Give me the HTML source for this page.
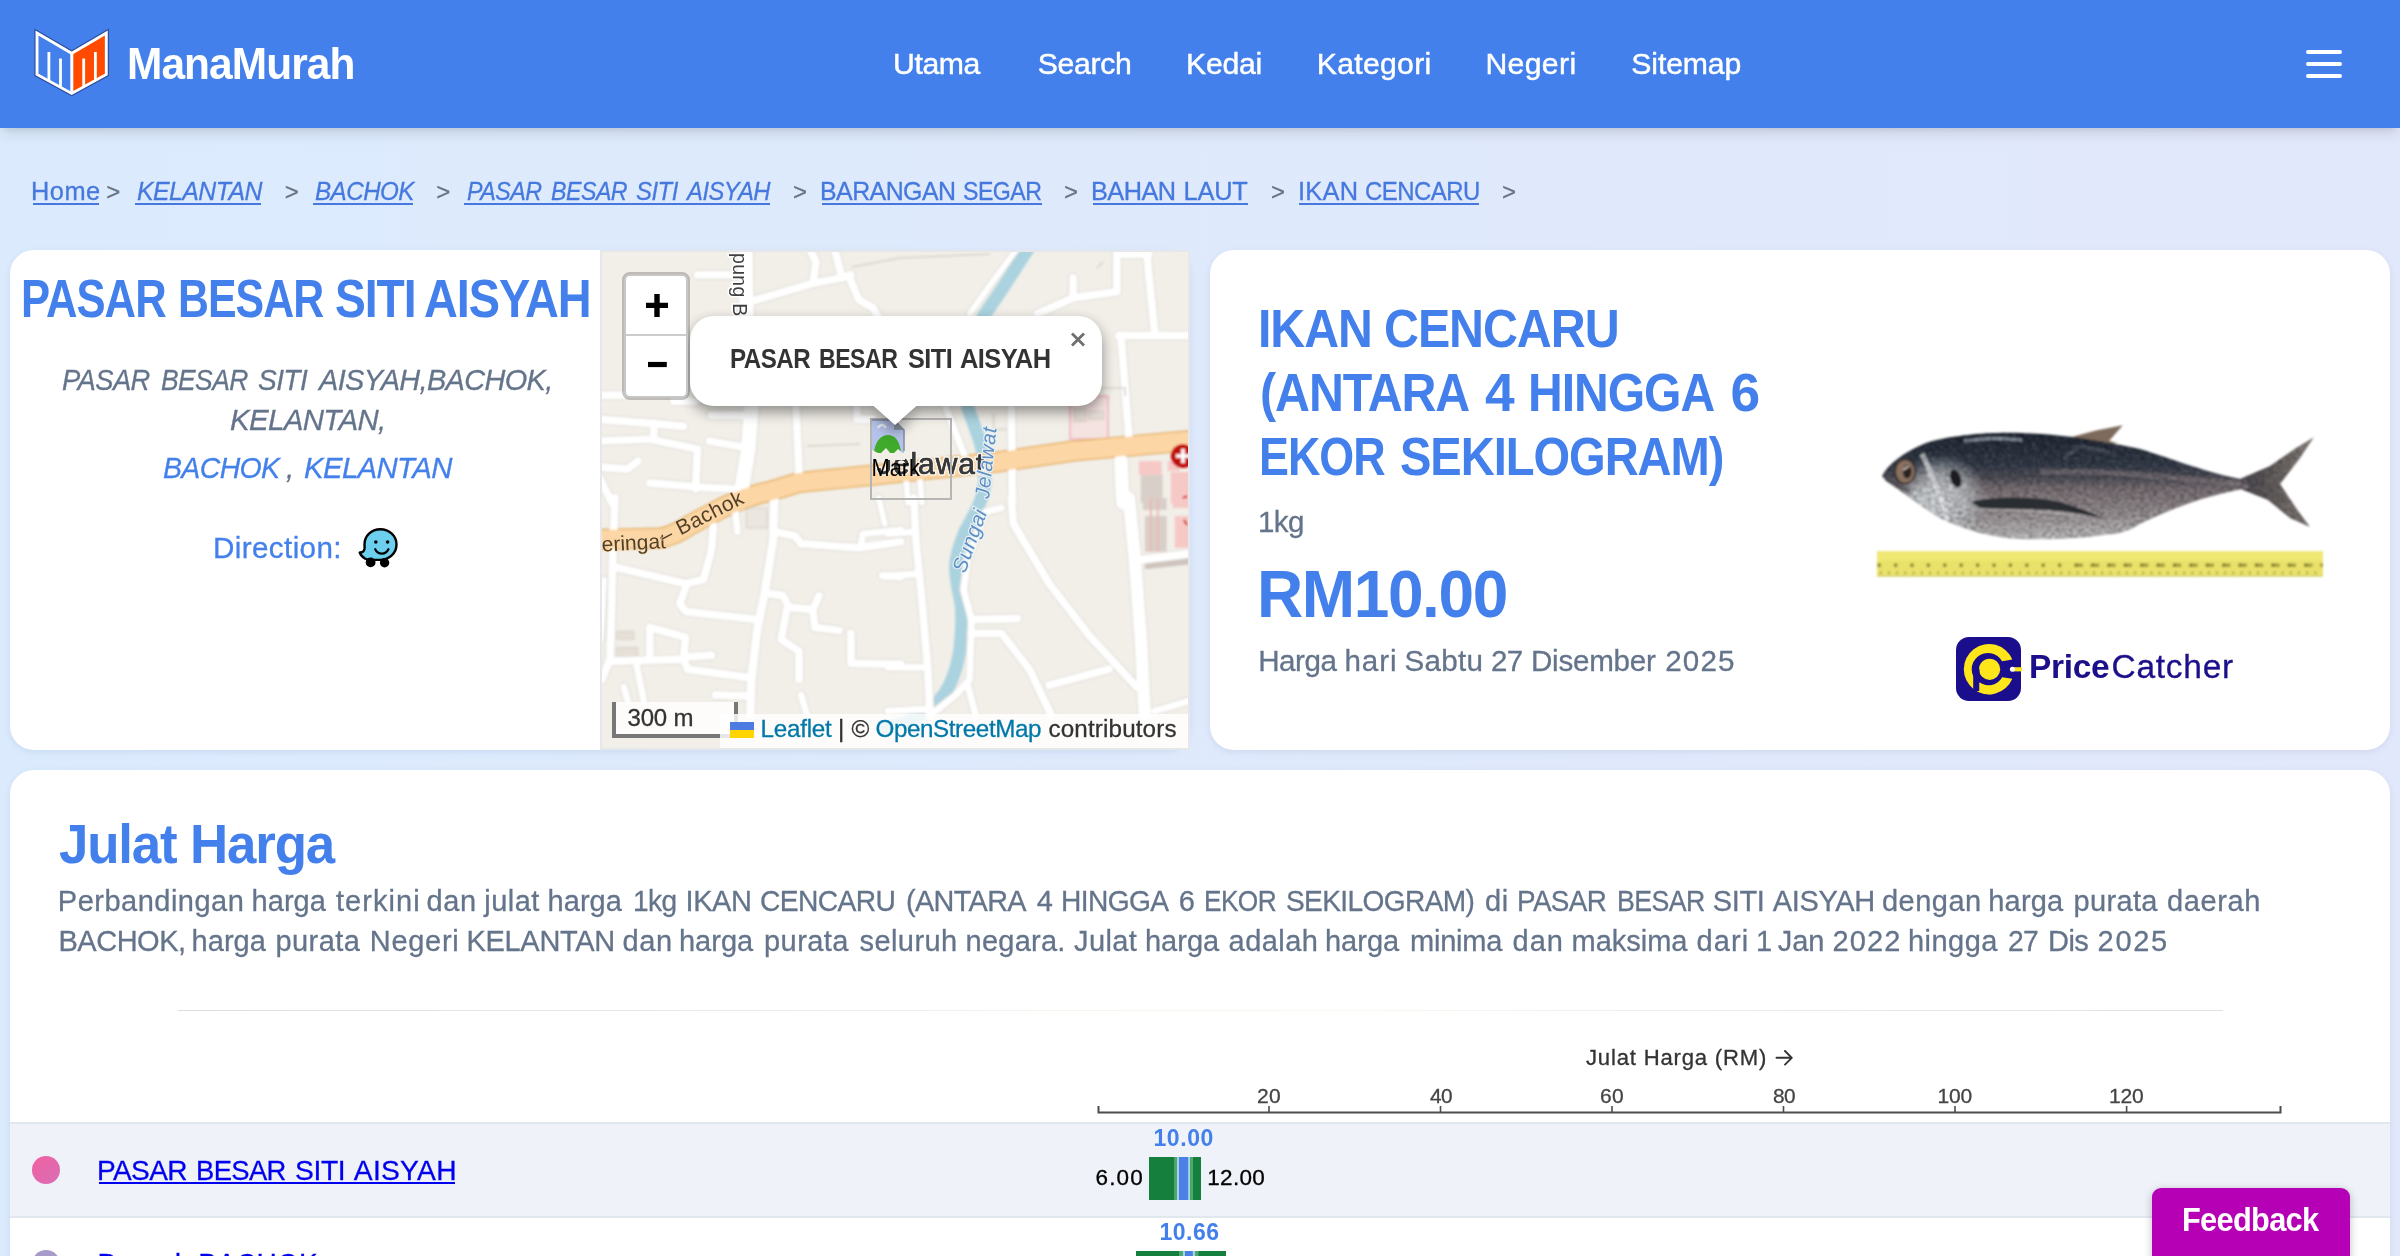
<!DOCTYPE html>
<html><head><meta charset="utf-8"><title>ManaMurah</title>
<style>
html,body{margin:0;padding:0}
body{width:2400px;height:1256px;overflow:hidden;position:relative;font-family:"Liberation Sans",sans-serif;background:linear-gradient(90deg,#dbebfd,#e2e8fb)}
#root{position:absolute;left:0;top:0;width:2400px;height:1256px;will-change:transform}
.t{position:absolute;white-space:nowrap;line-height:1;transform-origin:0 50%}
.u{position:absolute}
#hdr{position:absolute;left:0;top:0;width:2400px;height:128px;background:#4380ec;box-shadow:0 8px 12px -2px rgba(0,0,0,.1),0 4px 8px -4px rgba(0,0,0,.1)}
.hb{position:absolute;left:2306px;width:36px;height:4px;border-radius:2px;background:#fff}
.card{position:absolute;background:#fff;border-radius:24px;box-shadow:0 2px 6px rgba(60,80,140,.10)}
.dot{position:absolute;width:28px;height:28px;border-radius:50%}
#row1{position:absolute;left:10px;top:1122px;width:2380px;height:96px;box-sizing:border-box;background:#eff2f8;border-top:2px solid #e1e7ef;border-bottom:2px solid #e1e7ef}
#fb{position:absolute;left:2152px;top:1188px;width:198px;height:80px;border-radius:9px;background:#b500b5;box-shadow:0 2px 8px rgba(0,0,0,.25)}
svg{position:absolute;overflow:visible}
@media (max-width:1500px){html{zoom:.5}}
</style></head>
<body>
<div id="root">
<div id="hdr"></div>
<svg style="left:28px;top:22px" width="90" height="84" viewBox="28 22 90 84">
<polygon points="37,33 71.7,53.3 106.3,33 106.3,74.4 71.7,93.4 37,74.4" fill="none" stroke="#2c4c98" stroke-width="5.2" stroke-linejoin="miter"/>
<polygon points="37,33 71.7,53.3 71.7,93.4 37,74.4" fill="#4380ec"/>
<polygon points="71.7,53.3 106.3,33 106.3,74.4 71.7,93.4" fill="#ff4a00"/>
<path d="M48.9,52V80.9M60.5,58.6V87.3M83.7,58.6V86.8M95.4,52V80.4" stroke="#fff" stroke-width="2.8" fill="none"/>
<polygon points="37,33 71.7,53.3 106.3,33 106.3,74.4 71.7,93.4 37,74.4" fill="none" stroke="#fff" stroke-width="2.9" stroke-linejoin="miter"/>
<path d="M71.8,53.3V93.4" stroke="#fff" stroke-width="3" fill="none"/>
</svg>
<span class="t" style="left:127.16px;top:41.08px;font-size:44.8px;font-weight:700;letter-spacing:-0.986px;transform:scaleX(0.9476);color:#fff;">ManaMurah</span>
<span class="t" style="left:893.00px;top:48.94px;font-size:30.2px;letter-spacing:-0.406px;color:#fff;-webkit-text-stroke:.45px #fff;">Utama</span>
<span class="t" style="left:1037.75px;top:48.94px;font-size:30.2px;letter-spacing:-0.322px;color:#fff;-webkit-text-stroke:.45px #fff;">Search</span>
<span class="t" style="left:1186.00px;top:48.94px;font-size:30.2px;letter-spacing:-0.250px;color:#fff;-webkit-text-stroke:.45px #fff;">Kedai</span>
<span class="t" style="left:1316.75px;top:48.94px;font-size:30.2px;letter-spacing:0.289px;color:#fff;-webkit-text-stroke:.45px #fff;">Kategori</span>
<span class="t" style="left:1485.40px;top:48.94px;font-size:30.2px;letter-spacing:0.356px;color:#fff;-webkit-text-stroke:.45px #fff;">Negeri</span>
<span class="t" style="left:1631.30px;top:48.94px;font-size:30.2px;letter-spacing:-0.125px;color:#fff;-webkit-text-stroke:.45px #fff;">Sitemap</span>
<div class="hb" style="top:50px"></div><div class="hb" style="top:62px"></div><div class="hb" style="top:74px"></div>
<span class="t" style="left:31.00px;top:179.20px;font-size:25.4px;letter-spacing:0.464px;-webkit-text-stroke:.3px;color:#4678de;">Home</span>
<div class="u" style="left:32.5px;top:202.6px;width:66.5px;height:2px;background:#4678de"></div>
<span class="t" style="left:137.00px;top:179.20px;font-size:25.4px;font-style:italic;letter-spacing:-0.559px;transform:scaleX(0.9774);-webkit-text-stroke:.3px;color:#4678de;">KELANTAN</span>
<div class="u" style="left:135px;top:202.6px;width:126px;height:2px;background:#4678de"></div>
<span class="t" style="left:314.50px;top:179.20px;font-size:25.4px;font-style:italic;letter-spacing:-0.559px;transform:scaleX(0.9526);-webkit-text-stroke:.3px;color:#4678de;">BACHOK</span>
<div class="u" style="left:312.5px;top:202.6px;width:100.5px;height:2px;background:#4678de"></div>
<span class="t" style="left:467.00px;top:179.20px;font-size:25.4px;font-style:italic;letter-spacing:-0.559px;transform:scaleX(0.9152);-webkit-text-stroke:.3px;color:#4678de;">PASAR</span>
<span class="t" style="left:551.00px;top:179.20px;font-size:25.4px;font-style:italic;letter-spacing:-0.559px;transform:scaleX(0.9137);-webkit-text-stroke:.3px;color:#4678de;">BESAR</span>
<span class="t" style="left:636.00px;top:179.20px;font-size:25.4px;font-style:italic;letter-spacing:-0.559px;transform:scaleX(0.9437);-webkit-text-stroke:.3px;color:#4678de;">SITI</span>
<span class="t" style="left:687.38px;top:179.20px;font-size:25.4px;font-style:italic;letter-spacing:-0.559px;transform:scaleX(0.9389);-webkit-text-stroke:.3px;color:#4678de;">AISYAH</span>
<div class="u" style="left:464px;top:202.6px;width:305.5px;height:2px;background:#4678de"></div>
<span class="t" style="left:820.04px;top:179.20px;font-size:25.4px;letter-spacing:-0.559px;transform:scaleX(0.9811);-webkit-text-stroke:.3px;color:#4678de;">BARANGAN</span>
<span class="t" style="left:962.69px;top:179.20px;font-size:25.4px;letter-spacing:-0.559px;transform:scaleX(0.9107);-webkit-text-stroke:.3px;color:#4678de;">SEGAR</span>
<div class="u" style="left:821.5px;top:202.6px;width:220.0px;height:2px;background:#4678de"></div>
<span class="t" style="left:1091.01px;top:179.20px;font-size:25.4px;letter-spacing:-0.559px;transform:scaleX(0.9975);-webkit-text-stroke:.3px;color:#4678de;">BAHAN</span>
<span class="t" style="left:1183.50px;top:179.20px;font-size:25.4px;letter-spacing:-0.198px;-webkit-text-stroke:.3px;color:#4678de;">LAUT</span>
<div class="u" style="left:1092.5px;top:202.6px;width:155.0px;height:2px;background:#4678de"></div>
<span class="t" style="left:1298.00px;top:179.20px;font-size:25.4px;letter-spacing:0.258px;-webkit-text-stroke:.3px;color:#4678de;">IKAN</span>
<span class="t" style="left:1364.66px;top:179.20px;font-size:25.4px;letter-spacing:-0.559px;transform:scaleX(0.9436);-webkit-text-stroke:.3px;color:#4678de;">CENCARU</span>
<div class="u" style="left:1299px;top:202.6px;width:180px;height:2px;background:#4678de"></div>
<span class="t" style="left:106.30px;top:180.38px;font-size:24px;-webkit-text-stroke:.3px;color:#6b7280;">&gt;</span>
<span class="t" style="left:284.70px;top:180.38px;font-size:24px;-webkit-text-stroke:.3px;color:#6b7280;">&gt;</span>
<span class="t" style="left:436.30px;top:180.38px;font-size:24px;-webkit-text-stroke:.3px;color:#6b7280;">&gt;</span>
<span class="t" style="left:793.00px;top:180.38px;font-size:24px;-webkit-text-stroke:.3px;color:#6b7280;">&gt;</span>
<span class="t" style="left:1064.00px;top:180.38px;font-size:24px;-webkit-text-stroke:.3px;color:#6b7280;">&gt;</span>
<span class="t" style="left:1271.00px;top:180.38px;font-size:24px;-webkit-text-stroke:.3px;color:#6b7280;">&gt;</span>
<span class="t" style="left:1502.00px;top:180.38px;font-size:24px;-webkit-text-stroke:.3px;color:#6b7280;">&gt;</span>
<div class="card" style="left:10px;top:250px;width:1180px;height:500px"></div>
<div class="card" style="left:1210px;top:250px;width:1180px;height:500px"></div>
<div class="card" style="left:10px;top:770px;width:2380px;height:600px"></div>
<span class="t" style="left:21.04px;top:271.78px;font-size:53.3px;font-weight:700;letter-spacing:-1.173px;transform:scaleX(0.8187);color:#4380ec;">PASAR</span>
<span class="t" style="left:178.09px;top:271.78px;font-size:53.3px;font-weight:700;letter-spacing:-1.173px;transform:scaleX(0.8033);color:#4380ec;">BESAR</span>
<span class="t" style="left:334.63px;top:271.78px;font-size:53.3px;font-weight:700;letter-spacing:-1.173px;transform:scaleX(0.8662);color:#4380ec;">SITI</span>
<span class="t" style="left:424.12px;top:271.78px;font-size:53.3px;font-weight:700;letter-spacing:-1.173px;transform:scaleX(0.8800);color:#4380ec;">AISYAH</span>
<span class="t" style="left:62.00px;top:364.84px;font-size:29.6px;font-style:italic;letter-spacing:-0.651px;transform:scaleX(0.9248);-webkit-text-stroke:.3px;color:#64748b;">PASAR</span>
<span class="t" style="left:160.50px;top:364.84px;font-size:29.6px;font-style:italic;letter-spacing:-0.651px;transform:scaleX(0.8937);-webkit-text-stroke:.3px;color:#64748b;">BESAR</span>
<span class="t" style="left:258.00px;top:364.84px;font-size:29.6px;font-style:italic;letter-spacing:-0.651px;transform:scaleX(0.9504);-webkit-text-stroke:.3px;color:#64748b;">SITI</span>
<span class="t" style="left:318.95px;top:364.84px;font-size:29.6px;font-style:italic;letter-spacing:-0.651px;transform:scaleX(0.9763);-webkit-text-stroke:.3px;color:#64748b;">AISYAH,BACHOK,</span>
<span class="t" style="left:229.50px;top:404.84px;font-size:29.6px;font-style:italic;letter-spacing:-0.651px;transform:scaleX(0.9946);-webkit-text-stroke:.3px;color:#64748b;">KELANTAN,</span>
<span class="t" style="left:163.00px;top:452.94px;font-size:29.6px;font-style:italic;letter-spacing:-0.651px;transform:scaleX(0.9619);-webkit-text-stroke:.3px;color:#4380ec;">BACHOK</span>
<span class="t" style="left:286.00px;top:452.94px;font-size:29.6px;font-style:italic;-webkit-text-stroke:.3px;color:#64748b;">,</span>
<span class="t" style="left:303.50px;top:452.94px;font-size:29.6px;font-style:italic;letter-spacing:-0.651px;transform:scaleX(0.9926);-webkit-text-stroke:.3px;color:#4380ec;">KELANTAN</span>
<span class="t" style="left:213.00px;top:532.74px;font-size:29.6px;letter-spacing:0.392px;-webkit-text-stroke:.3px;color:#4380ec;">Direction:</span>
<svg style="left:358px;top:528px" width="40" height="40" viewBox="0 0 40 40">
<path d="M22.3,1.3c9,0,16.2,6.6,16.2,15.2c0,8.6-7.2,15.4-16.2,15.4c-1.6,0-3.4,0-5,0c-3.6,0-7.2,0.2-10-1.2c-2.8-1.4-4.6-3.6-5.6-6.2c2.6,0.2,4.4-1.2,4.8-3.6c0.2-1.4,0-3.2,0-4.6C6.5,7.9,13.3,1.3,22.3,1.3z" fill="#6ccfee" stroke="#000" stroke-width="2.4" stroke-linejoin="round"/>
<circle cx="12.6" cy="34.4" r="4.9" fill="#000"/><circle cx="26.6" cy="34.8" r="4.7" fill="#000"/>
<circle cx="17.8" cy="14" r="1.8" fill="#000"/><circle cx="29.6" cy="14" r="1.8" fill="#000"/>
<path d="M17.2,21.2c1.6,3.4,4,4.4,6.6,4.4s5-1,6.6-4.4" fill="none" stroke="#000" stroke-width="2.2" stroke-linecap="round"/>
</svg>
<div id="map" style="position:absolute;left:600px;top:250px;width:590px;height:500px;box-sizing:border-box;border:2px solid #e5e7eb;background:#f2efe9;overflow:hidden">
<svg style="left:-2px;top:-2px" width="590" height="500" viewBox="600 250 590 500">
<defs><filter id="mb" x="-2%" y="-2%" width="104%" height="104%"><feGaussianBlur stdDeviation="1.05"/></filter>
<filter id="lb" x="-2%" y="-2%" width="104%" height="104%"><feGaussianBlur stdDeviation="0.55"/></filter>
<filter id="psh" x="-20%" y="-30%" width="140%" height="180%"><feGaussianBlur stdDeviation="7"/></filter></defs>
<g filter="url(#mb)">
<!-- buildings / landuse -->
<g transform="translate(890,250) scale(0.19908)">
<path d="M905,735 H1095 V950 H905Z" fill="#f4e3e0" stroke="#f1b9c0" stroke-width="9"/>
<path d="M925,800 H985 V860 H925Z M1000,810 H1075 V850 H1000Z" fill="#e6dcd6" stroke="#d5cbc5" stroke-width="5"/>
<rect x="1250" y="1060" width="115" height="70" fill="#f6c9c6"/><rect x="1260" y="1130" width="110" height="140" fill="#d9cfc9"/>
<rect x="1410" y="1115" width="100" height="160" fill="#f6c9c6"/>
<rect x="1395" y="1060" width="60" height="50" fill="#f6c9c6"/>
<path d="M520,820 V900 H600" fill="none" stroke="#e2ddd6" stroke-width="14"/>
</g>
<g transform="translate(890,500) scale(0.19908)">
<rect x="1270" y="-10" width="120" height="60" fill="#d9cfc9"/><rect x="1280" y="80" width="110" height="180" fill="#d9cfc9"/>
<rect x="1420" y="-10" width="90" height="50" fill="#f6c9c6"/><rect x="1430" y="80" width="80" height="160" fill="#f6c9c6"/>
<path d="M1280,325 L1510,300" stroke="#cfc4be" stroke-width="45"/>
<path d="M1310,-10 V260 M1345,-10 V260" stroke="#e9b8b4" stroke-width="10"/>
</g>
<g transform="translate(600,500) scale(0.19908)">
<path d="M735,40 H840 V140 H735Z" fill="#ebe6df" stroke="#d9d4cc" stroke-width="6"/>
<path d="M85,660 H170 V700 H85Z M85,740 H190 V790 H85Z" fill="#e6e0d8" stroke="#d5d0c8" stroke-width="5"/>
</g>
<!-- river -->
<path d="M1030,246 L1001.5,290 L983.6,316 C970,345 964,380 967.6,407 L975.6,429 C982,445 986,460 985,480 C984,500 974,515 965.7,530 C958,548 955,560 955.7,570 C956,585 961,598 961.7,610 C962,625 961,640 959.7,650 C958,662 956,670 951.7,680 C947,692 940,700 933.8,706 L920,716 L902,724 L880,730" fill="none" stroke="#aad3df" stroke-width="13" stroke-linejoin="round"/>
<!-- roads -->
<g fill="none" stroke="#dcd8d1" stroke-linecap="round" stroke-linejoin="round"><g transform="translate(600,250) scale(0.19908)"><path d="M730,-10 L735,330 L760,790 L745,1000 L700,1270" stroke-width="84"/></g><g transform="translate(600,250) scale(0.19908)"><path d="M490,125 L700,125" stroke-width="49"/></g><g transform="translate(600,250) scale(0.19908)"><path d="M770,255 L1060,170 L1210,140 L1260,125" stroke-width="49"/></g><g transform="translate(600,250) scale(0.19908)"><path d="M1070,165 L1085,60 L1050,-10" stroke-width="49"/></g><g transform="translate(600,250) scale(0.19908)"><path d="M1215,140 L1190,40 L1175,-10" stroke-width="49"/></g><g transform="translate(600,250) scale(0.19908)"><path d="M1250,130 L1300,250 L1370,290 L1400,340" stroke-width="49"/></g><g transform="translate(600,250) scale(0.19908)"><path d="M-10,730 L120,730" stroke-width="49"/></g><g transform="translate(600,250) scale(0.19908)"><path d="M370,760 L480,760" stroke-width="49"/></g><g transform="translate(600,250) scale(0.19908)"><path d="M-10,850 L250,870 L420,885" stroke-width="49"/></g><g transform="translate(600,250) scale(0.19908)"><path d="M-10,960 L250,950 L490,1000 L480,1200" stroke-width="49"/></g><g transform="translate(600,250) scale(0.19908)"><path d="M270,870 L270,950" stroke-width="49"/></g><g transform="translate(600,250) scale(0.19908)"><path d="M-10,1090 L140,1100 L190,1060" stroke-width="49"/></g><g transform="translate(600,250) scale(0.19908)"><path d="M250,1170 L480,1190 L680,1200" stroke-width="49"/></g><g transform="translate(600,250) scale(0.19908)"><path d="M560,830 L730,830" stroke-width="49"/></g><g transform="translate(600,250) scale(0.19908)"><path d="M550,960 L720,990" stroke-width="49"/></g><g transform="translate(600,250) scale(0.19908)"><path d="M-10,1130 L60,1270" stroke-width="49"/></g><g transform="translate(600,250) scale(0.19908)"><path d="M985,790 L1000,1130" stroke-width="49"/></g><g transform="translate(600,250) scale(0.19908)"><path d="M1290,790 L1290,850 L1370,850" stroke-width="49"/></g><g transform="translate(890,250) scale(0.19908)"><path d="M640,-10 L500,180 L400,320" stroke-width="39"/></g><g transform="translate(890,250) scale(0.19908)"><path d="M920,140 L920,240 L740,320" stroke-width="49"/></g><g transform="translate(890,250) scale(0.19908)"><path d="M920,240 L1140,210 L1140,20 L1300,20" stroke-width="49"/></g><g transform="translate(890,250) scale(0.19908)"><path d="M1290,20 L1330,420" stroke-width="49"/></g><g transform="translate(890,250) scale(0.19908)"><path d="M1150,430 L1510,430" stroke-width="49"/></g><g transform="translate(890,250) scale(0.19908)"><path d="M1160,430 L1200,940" stroke-width="49"/></g><g transform="translate(890,250) scale(0.19908)"><path d="M1160,1060 L1170,1270" stroke-width="79"/></g><g transform="translate(890,250) scale(0.19908)"><path d="M610,790 L615,1270" stroke-width="49"/></g><g transform="translate(890,250) scale(0.19908)"><path d="M280,790 L400,1100" stroke-width="44"/></g><g transform="translate(890,250) scale(0.19908)"><path d="M80,1140 L90,1270" stroke-width="39"/></g><g transform="translate(890,250) scale(0.19908)"><path d="M150,1150 L160,1270" stroke-width="39"/></g><g transform="translate(600,500) scale(0.19908)"><path d="M75,-10 L65,250 L60,500 L50,800 L10,900" stroke-width="49"/></g><g transform="translate(600,500) scale(0.19908)"><path d="M20,400 L5,700" stroke-width="39"/></g><g transform="translate(600,500) scale(0.19908)"><path d="M85,340 L430,420 L520,400 L560,250 L570,130" stroke-width="49"/></g><g transform="translate(600,500) scale(0.19908)"><path d="M430,440 L400,520 L430,560 L790,600" stroke-width="49"/></g><g transform="translate(600,500) scale(0.19908)"><path d="M875,-10 L870,200 L830,450 L790,650 L760,900 L755,1080" stroke-width="54"/></g><g transform="translate(600,500) scale(0.19908)"><path d="M880,160 L980,180 L1010,220 L1300,240 L1510,210" stroke-width="49"/></g><g transform="translate(600,500) scale(0.19908)"><path d="M1310,230 L1320,170 L1510,150" stroke-width="44"/></g><g transform="translate(600,500) scale(0.19908)"><path d="M1400,-10 L1430,120" stroke-width="39"/></g><g transform="translate(600,500) scale(0.19908)"><path d="M840,470 L920,480 L950,540 L1070,550 L1100,480" stroke-width="49"/></g><g transform="translate(600,500) scale(0.19908)"><path d="M1070,560 L1080,640 L1200,655" stroke-width="49"/></g><g transform="translate(600,500) scale(0.19908)"><path d="M940,540 L910,700 L1000,760 L1000,900" stroke-width="49"/></g><g transform="translate(600,500) scale(0.19908)"><path d="M1260,670 L1260,820 L1510,825" stroke-width="49"/></g><g transform="translate(600,500) scale(0.19908)"><path d="M1420,380 L1510,385" stroke-width="49"/></g><g transform="translate(600,500) scale(0.19908)"><path d="M1010,980 L1040,1080" stroke-width="44"/></g><g transform="translate(600,500) scale(0.19908)"><path d="M250,640 L430,690 L420,790 L560,780" stroke-width="49"/></g><g transform="translate(600,500) scale(0.19908)"><path d="M250,640 L250,790" stroke-width="49"/></g><g transform="translate(600,500) scale(0.19908)"><path d="M60,810 L420,800 L440,850 L740,890" stroke-width="49"/></g><g transform="translate(600,500) scale(0.19908)"><path d="M180,810 L220,1010" stroke-width="44"/></g><g transform="translate(600,500) scale(0.19908)"><path d="M120,940 L140,1010" stroke-width="44"/></g><g transform="translate(600,500) scale(0.19908)"><path d="M580,980 L740,985" stroke-width="49"/></g><g transform="translate(600,500) scale(0.19908)"><path d="M680,60 L690,160" stroke-width="44"/></g><g transform="translate(890,500) scale(0.19908)"><path d="M560,40 L480,60 L390,300 L370,450 L410,600 L400,900 L330,980 L230,1060" stroke-width="44"/></g><g transform="translate(890,500) scale(0.19908)"><path d="M410,600 L640,595" stroke-width="49"/></g><g transform="translate(890,500) scale(0.19908)"><path d="M410,670 L560,670 L700,850 L810,1080" stroke-width="49"/></g><g transform="translate(890,500) scale(0.19908)"><path d="M610,-10 L620,120 L800,420 L1000,680 L1240,940" stroke-width="49"/></g><g transform="translate(890,500) scale(0.19908)"><path d="M800,930 L1100,850" stroke-width="49"/></g><g transform="translate(890,500) scale(0.19908)"><path d="M1200,-10 L1230,300 L1260,700 L1280,1080" stroke-width="74"/></g><g transform="translate(890,500) scale(0.19908)"><path d="M1260,300 L1500,270" stroke-width="49"/></g><g transform="translate(890,500) scale(0.19908)"><path d="M1330,1060 L1500,1010" stroke-width="44"/></g><g transform="translate(890,500) scale(0.19908)"><path d="M390,930 L430,1080" stroke-width="44"/></g><g transform="translate(890,500) scale(0.19908)"><path d="M120,-10 L130,200 L160,500 L190,850 L200,1080" stroke-width="49"/></g><g transform="translate(890,500) scale(0.19908)"><path d="M-10,170 L120,160" stroke-width="44"/></g><g transform="translate(890,500) scale(0.19908)"><path d="M-10,380 L140,370" stroke-width="44"/></g><g transform="translate(890,500) scale(0.19908)"><path d="M-10,840 L190,840" stroke-width="44"/></g><g transform="translate(890,500) scale(0.19908)"><path d="M-10,1060 L200,1050" stroke-width="44"/></g></g>
<path d="M596,539.5 L660,538 C675,536 683,529 690,525 L720,509 C738,500 752,495 771,491 L799,482.5 L869,475.5 L997.5,462 L1073,451 L1192,440.5" fill="none" stroke="#e2ab58" stroke-width="21" stroke-linejoin="round"/>
<g fill="none" stroke="#fff" stroke-linecap="round" stroke-linejoin="round"><g transform="translate(600,250) scale(0.19908)"><path d="M730,-10 L735,330 L760,790 L745,1000 L700,1270" stroke-width="75"/></g><g transform="translate(600,250) scale(0.19908)"><path d="M490,125 L700,125" stroke-width="40"/></g><g transform="translate(600,250) scale(0.19908)"><path d="M770,255 L1060,170 L1210,140 L1260,125" stroke-width="40"/></g><g transform="translate(600,250) scale(0.19908)"><path d="M1070,165 L1085,60 L1050,-10" stroke-width="40"/></g><g transform="translate(600,250) scale(0.19908)"><path d="M1215,140 L1190,40 L1175,-10" stroke-width="40"/></g><g transform="translate(600,250) scale(0.19908)"><path d="M1250,130 L1300,250 L1370,290 L1400,340" stroke-width="40"/></g><g transform="translate(600,250) scale(0.19908)"><path d="M-10,730 L120,730" stroke-width="40"/></g><g transform="translate(600,250) scale(0.19908)"><path d="M370,760 L480,760" stroke-width="40"/></g><g transform="translate(600,250) scale(0.19908)"><path d="M-10,850 L250,870 L420,885" stroke-width="40"/></g><g transform="translate(600,250) scale(0.19908)"><path d="M-10,960 L250,950 L490,1000 L480,1200" stroke-width="40"/></g><g transform="translate(600,250) scale(0.19908)"><path d="M270,870 L270,950" stroke-width="40"/></g><g transform="translate(600,250) scale(0.19908)"><path d="M-10,1090 L140,1100 L190,1060" stroke-width="40"/></g><g transform="translate(600,250) scale(0.19908)"><path d="M250,1170 L480,1190 L680,1200" stroke-width="40"/></g><g transform="translate(600,250) scale(0.19908)"><path d="M560,830 L730,830" stroke-width="40"/></g><g transform="translate(600,250) scale(0.19908)"><path d="M550,960 L720,990" stroke-width="40"/></g><g transform="translate(600,250) scale(0.19908)"><path d="M-10,1130 L60,1270" stroke-width="40"/></g><g transform="translate(600,250) scale(0.19908)"><path d="M985,790 L1000,1130" stroke-width="40"/></g><g transform="translate(600,250) scale(0.19908)"><path d="M1290,790 L1290,850 L1370,850" stroke-width="40"/></g><g transform="translate(890,250) scale(0.19908)"><path d="M640,-10 L500,180 L400,320" stroke-width="30"/></g><g transform="translate(890,250) scale(0.19908)"><path d="M920,140 L920,240 L740,320" stroke-width="40"/></g><g transform="translate(890,250) scale(0.19908)"><path d="M920,240 L1140,210 L1140,20 L1300,20" stroke-width="40"/></g><g transform="translate(890,250) scale(0.19908)"><path d="M1290,20 L1330,420" stroke-width="40"/></g><g transform="translate(890,250) scale(0.19908)"><path d="M1150,430 L1510,430" stroke-width="40"/></g><g transform="translate(890,250) scale(0.19908)"><path d="M1160,430 L1200,940" stroke-width="40"/></g><g transform="translate(890,250) scale(0.19908)"><path d="M1160,1060 L1170,1270" stroke-width="70"/></g><g transform="translate(890,250) scale(0.19908)"><path d="M610,790 L615,1270" stroke-width="40"/></g><g transform="translate(890,250) scale(0.19908)"><path d="M280,790 L400,1100" stroke-width="35"/></g><g transform="translate(890,250) scale(0.19908)"><path d="M80,1140 L90,1270" stroke-width="30"/></g><g transform="translate(890,250) scale(0.19908)"><path d="M150,1150 L160,1270" stroke-width="30"/></g><g transform="translate(600,500) scale(0.19908)"><path d="M75,-10 L65,250 L60,500 L50,800 L10,900" stroke-width="40"/></g><g transform="translate(600,500) scale(0.19908)"><path d="M20,400 L5,700" stroke-width="30"/></g><g transform="translate(600,500) scale(0.19908)"><path d="M85,340 L430,420 L520,400 L560,250 L570,130" stroke-width="40"/></g><g transform="translate(600,500) scale(0.19908)"><path d="M430,440 L400,520 L430,560 L790,600" stroke-width="40"/></g><g transform="translate(600,500) scale(0.19908)"><path d="M875,-10 L870,200 L830,450 L790,650 L760,900 L755,1080" stroke-width="45"/></g><g transform="translate(600,500) scale(0.19908)"><path d="M880,160 L980,180 L1010,220 L1300,240 L1510,210" stroke-width="40"/></g><g transform="translate(600,500) scale(0.19908)"><path d="M1310,230 L1320,170 L1510,150" stroke-width="35"/></g><g transform="translate(600,500) scale(0.19908)"><path d="M1400,-10 L1430,120" stroke-width="30"/></g><g transform="translate(600,500) scale(0.19908)"><path d="M840,470 L920,480 L950,540 L1070,550 L1100,480" stroke-width="40"/></g><g transform="translate(600,500) scale(0.19908)"><path d="M1070,560 L1080,640 L1200,655" stroke-width="40"/></g><g transform="translate(600,500) scale(0.19908)"><path d="M940,540 L910,700 L1000,760 L1000,900" stroke-width="40"/></g><g transform="translate(600,500) scale(0.19908)"><path d="M1260,670 L1260,820 L1510,825" stroke-width="40"/></g><g transform="translate(600,500) scale(0.19908)"><path d="M1420,380 L1510,385" stroke-width="40"/></g><g transform="translate(600,500) scale(0.19908)"><path d="M1010,980 L1040,1080" stroke-width="35"/></g><g transform="translate(600,500) scale(0.19908)"><path d="M250,640 L430,690 L420,790 L560,780" stroke-width="40"/></g><g transform="translate(600,500) scale(0.19908)"><path d="M250,640 L250,790" stroke-width="40"/></g><g transform="translate(600,500) scale(0.19908)"><path d="M60,810 L420,800 L440,850 L740,890" stroke-width="40"/></g><g transform="translate(600,500) scale(0.19908)"><path d="M180,810 L220,1010" stroke-width="35"/></g><g transform="translate(600,500) scale(0.19908)"><path d="M120,940 L140,1010" stroke-width="35"/></g><g transform="translate(600,500) scale(0.19908)"><path d="M580,980 L740,985" stroke-width="40"/></g><g transform="translate(600,500) scale(0.19908)"><path d="M680,60 L690,160" stroke-width="35"/></g><g transform="translate(890,500) scale(0.19908)"><path d="M560,40 L480,60 L390,300 L370,450 L410,600 L400,900 L330,980 L230,1060" stroke-width="35"/></g><g transform="translate(890,500) scale(0.19908)"><path d="M410,600 L640,595" stroke-width="40"/></g><g transform="translate(890,500) scale(0.19908)"><path d="M410,670 L560,670 L700,850 L810,1080" stroke-width="40"/></g><g transform="translate(890,500) scale(0.19908)"><path d="M610,-10 L620,120 L800,420 L1000,680 L1240,940" stroke-width="40"/></g><g transform="translate(890,500) scale(0.19908)"><path d="M800,930 L1100,850" stroke-width="40"/></g><g transform="translate(890,500) scale(0.19908)"><path d="M1200,-10 L1230,300 L1260,700 L1280,1080" stroke-width="65"/></g><g transform="translate(890,500) scale(0.19908)"><path d="M1260,300 L1500,270" stroke-width="40"/></g><g transform="translate(890,500) scale(0.19908)"><path d="M1330,1060 L1500,1010" stroke-width="35"/></g><g transform="translate(890,500) scale(0.19908)"><path d="M390,930 L430,1080" stroke-width="35"/></g><g transform="translate(890,500) scale(0.19908)"><path d="M120,-10 L130,200 L160,500 L190,850 L200,1080" stroke-width="40"/></g><g transform="translate(890,500) scale(0.19908)"><path d="M-10,170 L120,160" stroke-width="35"/></g><g transform="translate(890,500) scale(0.19908)"><path d="M-10,380 L140,370" stroke-width="35"/></g><g transform="translate(890,500) scale(0.19908)"><path d="M-10,840 L190,840" stroke-width="35"/></g><g transform="translate(890,500) scale(0.19908)"><path d="M-10,1060 L200,1050" stroke-width="35"/></g></g>
<path d="M596,539.5 L660,538 C675,536 683,529 690,525 L720,509 C738,500 752,495 771,491 L799,482.5 L869,475.5 L997.5,462 L1073,451 L1192,440.5" fill="none" stroke="#fcd6a4" stroke-width="18.5" stroke-linejoin="round"/>
<!-- thin minor lines -->
<g fill="none" stroke="#d6d2cb" stroke-width="1.6">
<path d="M807,446 L860,444"/><path d="M852,267 L900,258 L990,254"/><path d="M1125,396 L1125,388 L1075,388"/>
<path d="M1097,268 L1103,262"/>
</g>
<!-- hospital -->
<circle cx="1182.8" cy="456" r="12" fill="#c40d0d"/><path d="M1176,456H1190M1183,449V463" stroke="#fff" stroke-width="3.6"/>
<path d="M1183,498l4,-2M1184,520l3,5" stroke="#d2322d" stroke-width="2.4"/>
<!-- labels -->
</g>
<g filter="url(#lb)" font-family="Liberation Sans, sans-serif">
<text transform="translate(733,253) rotate(90)" font-size="19.5" fill="#3f3f3f" stroke="#fff" stroke-width="3" paint-order="stroke" letter-spacing=".3">pung Bukit</text>
<text transform="translate(602,551.5) rotate(-3)" font-size="21" fill="#4f3f2b" stroke="#fcd6a4" stroke-width="1.2" paint-order="stroke">eringat</text>
<text transform="translate(664,544) rotate(-27)" font-size="21" fill="#4f3f2b" stroke="#fcd6a4" stroke-width="1.2" paint-order="stroke" letter-spacing=".5">– Bachok</text>
<text x="877" y="473.5" font-size="30" fill="#383838" stroke="#f7f5f0" stroke-width="3.5" paint-order="stroke" letter-spacing=".9">Jelawat</text>
<text x="877" y="473.5" font-size="30" fill="#383838" stroke="#383838" stroke-width=".6" letter-spacing=".9">Jelawat</text>
<g font-size="20.5" font-style="italic" fill="#5f8fc4" stroke="#e9f2f5" stroke-width="2.2" paint-order="stroke" letter-spacing=".35">
<text transform="translate(965,574) rotate(-70)">Sungai</text>
<text transform="translate(989,499) rotate(-84)">Jelawat</text>
</g>
</g>
<!-- marker (broken image) -->
<rect x="871" y="419" width="80" height="80" fill="none" stroke="#b5b5b5" stroke-width="2"/>
<g transform="translate(872,420)">
<path d="M0,0H22L32,10V33H0Z" fill="#b5c3ea"/>
<path d="M22,0V10H32Z" fill="#8e98a8"/>
<path d="M2,33C3,20 10,15 16,15C23,15 28,21 29,33Z" fill="#3faa2c"/>
<path d="M0,30L8,34L14,28L20,35L26,29L33,35V40H0Z" fill="#f2efe9"/>
<path d="M0,0H22L32,10V31" fill="none" stroke="#8891a3" stroke-width="1.6"/>
<path d="M6,8c2,-4 6,-4 8,0" fill="none" stroke="#e8ecfa" stroke-width="2.4"/>
</g>
<text x="871.5" y="475.7" font-family="Liberation Sans, sans-serif" font-size="24" fill="#000" textLength="48.5" lengthAdjust="spacingAndGlyphs">Mark</text>
<!-- popup -->
<g filter="url(#psh)" opacity=".42"><rect x="690" y="322" width="412" height="90" rx="24"/><path d="M872,410H918L895,433Z"/></g>
<rect x="690" y="316" width="412" height="90" rx="24" fill="#fff"/>
<path d="M872.5,405H917.5L895,425Z" fill="#fff"/>
<path d="M1072,333.5L1084,345.5M1084,333.5L1072,345.5" stroke="#6f6f6f" stroke-width="2.8"/>
<!-- zoom control -->
<rect x="624" y="274" width="64" height="124" rx="6" fill="#fff" stroke="rgba(0,0,0,.22)" stroke-width="4"/>
<rect x="626" y="334" width="60" height="2" fill="#ccc"/>
<path d="M646,305.4H668M657,294V317" stroke="#000" stroke-width="5.4"/>
<path d="M648,364.5H666.8" stroke="#000" stroke-width="5.2"/>
<!-- scale -->
<rect x="612" y="702" width="126" height="36" fill="rgba(255,255,255,.8)"/>
<path d="M614,702V736H736V702" fill="none" stroke="#777" stroke-width="4"/>
<!-- attribution -->
<rect x="720" y="714" width="470" height="36" fill="rgba(255,255,255,.82)"/>
<rect x="730" y="722" width="24" height="8" fill="#4c7be1"/><rect x="730" y="730" width="24" height="8" fill="#ffd500"/>
</svg>
</div>
<span class="t" style="left:730.11px;top:345.18px;font-size:27.2px;font-weight:700;letter-spacing:-0.598px;transform:scaleX(0.8877);color:#333;">PASAR</span>
<span class="t" style="left:819.35px;top:345.18px;font-size:27.2px;font-weight:700;letter-spacing:-0.598px;transform:scaleX(0.8509);color:#333;">BESAR</span>
<span class="t" style="left:907.80px;top:345.18px;font-size:27.2px;font-weight:700;letter-spacing:-0.598px;transform:scaleX(0.9290);color:#333;">SITI</span>
<span class="t" style="left:960.30px;top:345.18px;font-size:27.2px;font-weight:700;letter-spacing:-0.598px;transform:scaleX(0.9362);color:#333;">AISYAH</span>
<span class="t" style="left:627.50px;top:705.68px;font-size:24px;letter-spacing:-0.178px;-webkit-text-stroke:.3px;color:#333;">300 m</span>
<span class="t" style="left:760.50px;top:717.21px;font-size:24.2px;letter-spacing:-0.234px;-webkit-text-stroke:.3px;color:#0078a8;">Leaflet</span>
<span class="t" style="left:838.00px;top:717.21px;font-size:24.2px;-webkit-text-stroke:.3px;color:#333;">|</span>
<span class="t" style="left:851.60px;top:717.21px;font-size:24.2px;-webkit-text-stroke:.3px;color:#333;">©</span>
<span class="t" style="left:875.50px;top:717.21px;font-size:24.2px;letter-spacing:-0.400px;-webkit-text-stroke:.3px;color:#0078a8;">OpenStreetMap</span>
<span class="t" style="left:1048.50px;top:717.21px;font-size:24.2px;letter-spacing:0.148px;-webkit-text-stroke:.3px;color:#333;">contributors</span>
<span class="t" style="left:1258.38px;top:301.78px;font-size:53.3px;font-weight:700;letter-spacing:-1.173px;transform:scaleX(0.9055);color:#4380ec;">IKAN</span>
<span class="t" style="left:1384.18px;top:301.78px;font-size:53.3px;font-weight:700;letter-spacing:-1.173px;transform:scaleX(0.9080);color:#4380ec;">CENCARU</span>
<span class="t" style="left:1260.19px;top:365.78px;font-size:53.3px;font-weight:700;letter-spacing:-1.173px;transform:scaleX(0.9072);color:#4380ec;">(ANTARA</span>
<span class="t" style="left:1485.00px;top:365.78px;font-size:53.3px;font-weight:700;color:#4380ec;">4</span>
<span class="t" style="left:1528.29px;top:365.78px;font-size:53.3px;font-weight:700;letter-spacing:-1.173px;transform:scaleX(0.9027);color:#4380ec;">HINGGA</span>
<span class="t" style="left:1730.50px;top:365.78px;font-size:53.3px;font-weight:700;color:#4380ec;">6</span>
<span class="t" style="left:1258.78px;top:429.78px;font-size:53.3px;font-weight:700;letter-spacing:-1.173px;transform:scaleX(0.8416);color:#4380ec;">EKOR</span>
<span class="t" style="left:1399.62px;top:429.78px;font-size:53.3px;font-weight:700;letter-spacing:-1.173px;transform:scaleX(0.8834);color:#4380ec;">SEKILOGRAM)</span>
<span class="t" style="left:1257.60px;top:507.04px;font-size:29.6px;letter-spacing:-0.651px;transform:scaleX(0.9988);-webkit-text-stroke:.3px;color:#64748b;">1kg</span>
<span class="t" style="left:1257.32px;top:560.93px;font-size:66px;font-weight:700;letter-spacing:-1.452px;transform:scaleX(0.9699);color:#4380ec;">RM10.00</span>
<span class="t" style="left:1258.20px;top:645.94px;font-size:29.6px;letter-spacing:-0.461px;-webkit-text-stroke:.3px;color:#64748b;">Harga</span>
<span class="t" style="left:1344.50px;top:645.94px;font-size:29.6px;letter-spacing:0.909px;-webkit-text-stroke:.3px;color:#64748b;">hari</span>
<span class="t" style="left:1404.50px;top:645.94px;font-size:29.6px;letter-spacing:0.280px;-webkit-text-stroke:.3px;color:#64748b;">Sabtu</span>
<span class="t" style="left:1490.80px;top:645.94px;font-size:29.6px;letter-spacing:-0.651px;transform:scaleX(0.9964);-webkit-text-stroke:.3px;color:#64748b;">27</span>
<span class="t" style="left:1531.00px;top:645.94px;font-size:29.6px;letter-spacing:-0.253px;-webkit-text-stroke:.3px;color:#64748b;">Disember</span>
<span class="t" style="left:1665.30px;top:645.94px;font-size:29.6px;letter-spacing:1.108px;-webkit-text-stroke:.3px;color:#64748b;">2025</span>
<svg style="left:1860px;top:400px" width="480" height="200" viewBox="0 0 2400 1000">
<defs>
<linearGradient id="fb" x1="0" y1="0" x2="0" y2="1">
<stop offset="0" stop-color="#1b222e"/><stop offset=".3" stop-color="#2f3746"/><stop offset=".42" stop-color="#4c4b55"/><stop offset=".52" stop-color="#776d72"/><stop offset=".75" stop-color="#978f92"/><stop offset="1" stop-color="#c6c5c5"/>
</linearGradient>
<linearGradient id="tl" x1="0" y1="0" x2="1" y2="0"><stop offset="0" stop-color="#4b4a52"/><stop offset=".5" stop-color="#6b6564"/><stop offset="1" stop-color="#8c8480"/></linearGradient>
<radialGradient id="hd" cx=".5" cy=".5" r=".5"><stop offset="0" stop-color="#dfe3e6" stop-opacity=".95"/><stop offset=".6" stop-color="#c9ced2" stop-opacity=".7"/><stop offset="1" stop-color="#b9bec3" stop-opacity="0"/></radialGradient>
<clipPath id="bc"><path d="M110,380 C140,320 220,260 330,215 C450,175 650,160 800,165 C950,168 1150,190 1400,245 C1550,290 1750,370 1930,400 L1950,440 C1800,460 1600,520 1400,620 C1340,660 1280,672 1230,672 C1150,690 950,700 800,695 C650,690 500,640 400,590 C300,530 200,450 130,405Z"/></clipPath>
<filter id="fbl" x="-5%" y="-10%" width="110%" height="120%"><feGaussianBlur stdDeviation="4.5"/></filter>
<filter id="tex" x="0" y="0" width="100%" height="100%"><feTurbulence type="fractalNoise" baseFrequency="0.045 0.07" numOctaves="2" seed="7" result="n"/>
<feColorMatrix in="n" type="matrix" values="0 0 0 0 0  0 0 0 0 0  0 0 0 0 0  1.6 1.2 0 0 -1.05" result="a"/><feComposite in="a" in2="SourceGraphic" operator="in"/></filter>
<filter id="texw" x="0" y="0" width="100%" height="100%"><feTurbulence type="fractalNoise" baseFrequency="0.05 0.08" numOctaves="2" seed="23" result="n"/>
<feColorMatrix in="n" type="matrix" values="0 0 0 0 1  0 0 0 0 1  0 0 0 0 1  1.5 1.3 0 0 -1.15" result="a"/><feComposite in="a" in2="SourceGraphic" operator="in"/></filter>
</defs>
<g filter="url(#fbl)">
<path d="M1040,190 L1180,152 L1314,126 L1245,205 L1290,215 L1150,225Z" fill="#7d6a5c"/>
<path d="M1900,395 L2050,330 L2180,240 L2268,188 L2200,290 L2100,420 L2180,540 L2250,635 L2150,590 L2040,500 L1910,448Z" fill="url(#tl)"/>
<path d="M1900,395 L2050,330 L2180,240 L2268,188 L2200,290 L2100,420 L2180,540 L2250,635 L2150,590 L2040,500 L1910,448Z" fill="#000" filter="url(#tex)" opacity=".35"/>
<path d="M110,380 C140,320 220,260 330,215 C450,175 650,160 800,165 C950,168 1150,190 1400,245 C1550,290 1750,370 1930,400 L1950,440 C1800,460 1600,520 1400,620 C1340,660 1280,672 1230,672 C1150,690 950,700 800,695 C650,690 500,640 400,590 C300,530 200,450 130,405Z" fill="url(#fb)"/>
<g clip-path="url(#bc)">
<ellipse cx="410" cy="500" rx="230" ry="230" fill="url(#hd)"/>
<ellipse cx="330" cy="520" rx="120" ry="120" fill="url(#hd)"/>
<path d="M310,270 C345,330 372,420 440,600" stroke="#f0f2f4" stroke-width="26" fill="none" opacity=".75"/>
<path d="M900,360 C1200,350 1500,380 1900,418" stroke="#8d8085" stroke-width="26" fill="none" opacity=".55"/>
<path d="M520,205 C620,188 720,188 810,202" stroke="#aab6c6" stroke-width="16" fill="none" opacity=".75"/>
<path d="M1020,290 L1100,230 L1250,260" stroke="#5d6676" stroke-width="16" fill="none" opacity=".6"/>
<path d="M110,380 C140,320 220,260 330,215 C450,175 650,160 800,165 C950,168 1150,190 1400,245 C1550,290 1750,370 1930,400 L1950,440 C1800,460 1600,520 1400,620 C1340,660 1280,672 1230,672 C1150,690 950,700 800,695 C650,690 500,640 400,590 C300,530 200,450 130,405Z" fill="#000" filter="url(#tex)" opacity=".38"/>
<path d="M110,380 C140,320 220,260 330,215 C450,175 650,160 800,165 C950,168 1150,190 1400,245 C1550,290 1750,370 1930,400 L1950,440 C1800,460 1600,520 1400,620 C1340,660 1280,672 1230,672 C1150,690 950,700 800,695 C650,690 500,640 400,590 C300,530 200,450 130,405Z" fill="#fff" filter="url(#texw)" opacity=".14"/>
</g>
<ellipse cx="224" cy="357" rx="56" ry="66" fill="#3b3430"/>
<ellipse cx="226" cy="358" rx="46" ry="56" fill="#8a7160"/>
<ellipse cx="236" cy="358" rx="22" ry="34" fill="#2a2320"/>
<path d="M215,350 L245,330" stroke="#e9dfd2" stroke-width="10" opacity=".8"/>
<ellipse cx="478" cy="392" rx="26" ry="46" fill="#1d1f24" transform="rotate(-20 478 392)"/>
<path d="M130,395 C170,420 200,440 250,455" stroke="#40424a" stroke-width="10" fill="none" opacity=".7"/>
<path d="M555,508 C650,485 850,475 1000,510 C1100,540 1170,565 1215,592 C1120,570 1000,548 850,545 C750,545 650,548 600,540Z" fill="#2b2d33"/>
<path d="M600,545 C750,552 900,548 1100,580" stroke="#c9c7c8" stroke-width="10" fill="none" opacity=".5"/>
</g>
<g filter="url(#fbl)">
<rect x="85" y="757" width="2230" height="124" fill="#e9e169"/>
<rect x="85" y="757" width="2230" height="46" fill="#efe873"/>
<path d="M88,826H2312" stroke="#86802c" stroke-width="18" stroke-dasharray="16 66"/>
<path d="M1080,826H2312" stroke="#86802c" stroke-width="18" stroke-dasharray="34 48" opacity=".7"/>
<path d="M100,864H2312" stroke="#aaa444" stroke-width="16" stroke-dasharray="8 33"/>
<path d="M85,880H2315" stroke="#c9c15a" stroke-width="6"/>
</g>
</svg>
<svg style="left:1956px;top:637px" width="66" height="64" viewBox="0 0 66 64">
<rect x="0" y="0" width="65" height="64" rx="13" fill="#1b0e8c"/>
<path d="M56.3,22.6A25.2,25.2 0 1 0 56.3,41.8L46.2,40.2A16.3,16.3 0 1 1 46.2,24.2Z" fill="#ffe61a"/>
<circle cx="33.6" cy="32.3" r="10.6" fill="#ffe61a"/>
<rect x="17.2" y="32" width="6.3" height="22" fill="#1b0e8c"/>
<path d="M23.5,45.2c4,2.8 9,3.8 13.5,3.2l0,8.6c-5,0.6 -10,-0.2 -13.5,-2z" fill="#ffe61a"/>
<rect x="57" y="30.2" width="9" height="4.2" fill="#ffe61a"/>
<circle cx="56.4" cy="32.3" r="2.5" fill="#fff"/>
</svg>
<span class="t" style="left:2029.00px;top:650.34px;font-size:33.5px;font-weight:700;letter-spacing:-0.330px;color:#1c0f8a;">Price</span>
<span class="t" style="left:2111.50px;top:650.34px;font-size:33.5px;letter-spacing:0.726px;-webkit-text-stroke:.3px;color:#1c0f8a;">Catcher</span>
<span class="t" style="left:59.00px;top:815.60px;font-size:56px;font-weight:700;letter-spacing:-1.232px;transform:scaleX(0.9437);color:#4380ec;">Julat Harga</span>
<span class="t" style="left:57.80px;top:887.35px;font-size:29px;letter-spacing:0.494px;-webkit-text-stroke:.3px;color:#64748b;">Perbandingan</span>
<span class="t" style="left:251.60px;top:887.35px;font-size:29px;letter-spacing:0.014px;-webkit-text-stroke:.3px;color:#64748b;">harga</span>
<span class="t" style="left:336.00px;top:887.35px;font-size:29px;letter-spacing:1.064px;-webkit-text-stroke:.3px;color:#64748b;">terkini</span>
<span class="t" style="left:426.60px;top:887.35px;font-size:29px;letter-spacing:0.572px;-webkit-text-stroke:.3px;color:#64748b;">dan</span>
<span class="t" style="left:484.30px;top:887.35px;font-size:29px;letter-spacing:0.464px;-webkit-text-stroke:.3px;color:#64748b;">julat</span>
<span class="t" style="left:547.60px;top:887.35px;font-size:29px;letter-spacing:0.014px;-webkit-text-stroke:.3px;color:#64748b;">harga</span>
<span class="t" style="left:633.06px;top:887.35px;font-size:29px;letter-spacing:-0.638px;transform:scaleX(0.9681);-webkit-text-stroke:.3px;color:#64748b;">1kg</span>
<span class="t" style="left:685.50px;top:887.35px;font-size:29px;letter-spacing:-0.414px;-webkit-text-stroke:.3px;color:#64748b;">IKAN</span>
<span class="t" style="left:760.03px;top:887.35px;font-size:29px;letter-spacing:-0.638px;transform:scaleX(0.9734);-webkit-text-stroke:.3px;color:#64748b;">CENCARU</span>
<span class="t" style="left:905.51px;top:887.35px;font-size:29px;letter-spacing:-0.638px;transform:scaleX(0.9937);-webkit-text-stroke:.3px;color:#64748b;">(ANTARA</span>
<span class="t" style="left:1036.70px;top:887.35px;font-size:29px;-webkit-text-stroke:.3px;color:#64748b;">4</span>
<span class="t" style="left:1060.56px;top:887.35px;font-size:29px;letter-spacing:-0.638px;transform:scaleX(0.9721);-webkit-text-stroke:.3px;color:#64748b;">HINGGA</span>
<span class="t" style="left:1178.80px;top:887.35px;font-size:29px;-webkit-text-stroke:.3px;color:#64748b;">6</span>
<span class="t" style="left:1204.19px;top:887.35px;font-size:29px;letter-spacing:-0.638px;transform:scaleX(0.9052);-webkit-text-stroke:.3px;color:#64748b;">EKOR</span>
<span class="t" style="left:1286.03px;top:887.35px;font-size:29px;letter-spacing:-0.638px;transform:scaleX(0.9683);-webkit-text-stroke:.3px;color:#64748b;">SEKILOGRAM)</span>
<span class="t" style="left:1485.00px;top:887.35px;font-size:29px;letter-spacing:0.572px;-webkit-text-stroke:.3px;color:#64748b;">di</span>
<span class="t" style="left:1517.08px;top:887.35px;font-size:29px;letter-spacing:-0.638px;transform:scaleX(0.9596);-webkit-text-stroke:.3px;color:#64748b;">PASAR</span>
<span class="t" style="left:1616.66px;top:887.35px;font-size:29px;letter-spacing:-0.638px;transform:scaleX(0.9211);-webkit-text-stroke:.3px;color:#64748b;">BESAR</span>
<span class="t" style="left:1712.80px;top:887.35px;font-size:29px;letter-spacing:-0.405px;-webkit-text-stroke:.3px;color:#64748b;">SITI</span>
<span class="t" style="left:1772.70px;top:887.35px;font-size:29px;letter-spacing:-0.335px;-webkit-text-stroke:.3px;color:#64748b;">AISYAH</span>
<span class="t" style="left:1882.00px;top:887.35px;font-size:29px;letter-spacing:0.472px;-webkit-text-stroke:.3px;color:#64748b;">dengan</span>
<span class="t" style="left:1988.30px;top:887.35px;font-size:29px;letter-spacing:0.164px;-webkit-text-stroke:.3px;color:#64748b;">harga</span>
<span class="t" style="left:2073.50px;top:887.35px;font-size:29px;letter-spacing:0.340px;-webkit-text-stroke:.3px;color:#64748b;">purata</span>
<span class="t" style="left:2167.00px;top:887.35px;font-size:29px;letter-spacing:0.626px;-webkit-text-stroke:.3px;color:#64748b;">daerah</span>
<span class="t" style="left:58.50px;top:927.35px;font-size:29px;letter-spacing:-0.495px;-webkit-text-stroke:.3px;color:#64748b;">BACHOK,</span>
<span class="t" style="left:191.60px;top:927.35px;font-size:29px;letter-spacing:0.014px;-webkit-text-stroke:.3px;color:#64748b;">harga</span>
<span class="t" style="left:275.50px;top:927.35px;font-size:29px;letter-spacing:0.420px;-webkit-text-stroke:.3px;color:#64748b;">purata</span>
<span class="t" style="left:369.80px;top:927.35px;font-size:29px;letter-spacing:0.703px;-webkit-text-stroke:.3px;color:#64748b;">Negeri</span>
<span class="t" style="left:466.50px;top:927.35px;font-size:29px;letter-spacing:-0.315px;-webkit-text-stroke:.3px;color:#64748b;">KELANTAN</span>
<span class="t" style="left:622.60px;top:927.35px;font-size:29px;letter-spacing:0.572px;-webkit-text-stroke:.3px;color:#64748b;">dan</span>
<span class="t" style="left:679.00px;top:927.35px;font-size:29px;letter-spacing:-0.011px;-webkit-text-stroke:.3px;color:#64748b;">harga</span>
<span class="t" style="left:764.00px;top:927.35px;font-size:29px;letter-spacing:0.440px;-webkit-text-stroke:.3px;color:#64748b;">purata</span>
<span class="t" style="left:859.50px;top:927.35px;font-size:29px;letter-spacing:0.419px;-webkit-text-stroke:.3px;color:#64748b;">seluruh</span>
<span class="t" style="left:965.50px;top:927.35px;font-size:29px;letter-spacing:0.250px;-webkit-text-stroke:.3px;color:#64748b;">negara.</span>
<span class="t" style="left:1074.00px;top:927.35px;font-size:29px;letter-spacing:0.375px;-webkit-text-stroke:.3px;color:#64748b;">Julat</span>
<span class="t" style="left:1145.00px;top:927.35px;font-size:29px;letter-spacing:-0.011px;-webkit-text-stroke:.3px;color:#64748b;">harga</span>
<span class="t" style="left:1228.60px;top:927.35px;font-size:29px;letter-spacing:0.429px;-webkit-text-stroke:.3px;color:#64748b;">adalah</span>
<span class="t" style="left:1325.00px;top:927.35px;font-size:29px;letter-spacing:-0.011px;-webkit-text-stroke:.3px;color:#64748b;">harga</span>
<span class="t" style="left:1410.00px;top:927.35px;font-size:29px;letter-spacing:-0.206px;-webkit-text-stroke:.3px;color:#64748b;">minima</span>
<span class="t" style="left:1512.60px;top:927.35px;font-size:29px;letter-spacing:0.922px;-webkit-text-stroke:.3px;color:#64748b;">dan</span>
<span class="t" style="left:1571.50px;top:927.35px;font-size:29px;letter-spacing:-0.014px;-webkit-text-stroke:.3px;color:#64748b;">maksima</span>
<span class="t" style="left:1696.60px;top:927.35px;font-size:29px;letter-spacing:1.062px;-webkit-text-stroke:.3px;color:#64748b;">dari</span>
<span class="t" style="left:1756.00px;top:927.35px;font-size:29px;-webkit-text-stroke:.3px;color:#64748b;">1</span>
<span class="t" style="left:1777.70px;top:927.35px;font-size:29px;letter-spacing:-0.014px;-webkit-text-stroke:.3px;color:#64748b;">Jan</span>
<span class="t" style="left:1832.60px;top:927.35px;font-size:29px;letter-spacing:1.105px;-webkit-text-stroke:.3px;color:#64748b;">2022</span>
<span class="t" style="left:1908.00px;top:927.35px;font-size:29px;letter-spacing:0.469px;-webkit-text-stroke:.3px;color:#64748b;">hingga</span>
<span class="t" style="left:2007.63px;top:927.35px;font-size:29px;letter-spacing:-0.638px;transform:scaleX(0.9732);-webkit-text-stroke:.3px;color:#64748b;">27</span>
<span class="t" style="left:2048.00px;top:927.35px;font-size:29px;letter-spacing:-0.543px;-webkit-text-stroke:.3px;color:#64748b;">Dis</span>
<span class="t" style="left:2097.60px;top:927.35px;font-size:29px;letter-spacing:1.672px;-webkit-text-stroke:.3px;color:#64748b;">2025</span>
<div class="u" style="left:178px;top:1009.5px;width:2045px;height:1.3px;background:linear-gradient(90deg,#d9dfdf,#e6ebe9 25%,#f8f8ee 48%,#faf8f0 58%,#ece9e9 80%,#e2dfe0)"></div>
<span class="t" style="left:1586.00px;top:1046.99px;font-size:22.1px;letter-spacing:0.811px;-webkit-text-stroke:.3px;color:#333;">Julat Harga (RM)</span>
<svg style="left:0;top:0" width="2400" height="1256" viewBox="0 0 2400 1256">
<path d="M1098.5,1106V1112.5H2280.5V1106" fill="none" stroke="#4d4d4d" stroke-width="2"/>
<path d="M1776.5,1057.8H1791.5M1785,1051l6.8,6.8l-6.8,6.8" fill="none" stroke="#333" stroke-width="1.9" stroke-linecap="round" stroke-linejoin="round"/>
<path d="M1269,1106v6M1440.5,1106v6M1612,1106v6M1783.5,1106v6M1955,1106v6M2126.6,1106v6" stroke="#4d4d4d" stroke-width="1.6"/>
</svg>
<span class="t" style="left:1257.00px;top:1085.12px;font-size:21px;letter-spacing:0.321px;-webkit-text-stroke:.3px;color:#444;">20</span>
<span class="t" style="left:1429.50px;top:1085.12px;font-size:21px;letter-spacing:-0.462px;transform:scaleX(0.9902);-webkit-text-stroke:.3px;color:#444;">40</span>
<span class="t" style="left:1600.00px;top:1085.12px;font-size:21px;letter-spacing:0.321px;-webkit-text-stroke:.3px;color:#444;">60</span>
<span class="t" style="left:1772.50px;top:1085.12px;font-size:21px;letter-spacing:-0.462px;transform:scaleX(0.9902);-webkit-text-stroke:.3px;color:#444;">80</span>
<span class="t" style="left:1937.50px;top:1085.12px;font-size:21px;letter-spacing:-0.179px;-webkit-text-stroke:.3px;color:#444;">100</span>
<span class="t" style="left:2109.10px;top:1085.12px;font-size:21px;letter-spacing:-0.179px;-webkit-text-stroke:.3px;color:#444;">120</span>
<div id="row1"></div><div id="row2line"></div>
<div class="dot" style="left:32px;top:1156px;background:linear-gradient(135deg,#f25fa2,#d86fb4)"></div>
<div class="dot" style="left:32px;top:1250px;background:#a79cc9"></div>
<span class="t" style="left:97.31px;top:1155.93px;font-size:28.2px;letter-spacing:-0.620px;transform:scaleX(0.9952);-webkit-text-stroke:.3px;color:#0000ee;">PASAR</span>
<span class="t" style="left:195.76px;top:1155.93px;font-size:28.2px;letter-spacing:-0.620px;transform:scaleX(0.9711);-webkit-text-stroke:.3px;color:#0000ee;">BESAR</span>
<span class="t" style="left:295.00px;top:1155.93px;font-size:28.2px;letter-spacing:-0.350px;-webkit-text-stroke:.3px;color:#0000ee;">SITI</span>
<span class="t" style="left:353.80px;top:1155.93px;font-size:28.2px;letter-spacing:0.292px;-webkit-text-stroke:.3px;color:#0000ee;">AISYAH</span>
<div class="u" style="left:98.5px;top:1182.4px;width:356.8px;height:2px;background:#0000ee"></div>
<span class="t" style="left:97.50px;top:1248.93px;font-size:28.2px;letter-spacing:0.082px;-webkit-text-stroke:.3px;color:#0000ee;">Daerah BACHOK</span>
<span class="t" style="left:1153.50px;top:1126.53px;font-size:23px;font-weight:700;letter-spacing:0.559px;color:#4380ec;">10.00</span>
<span class="t" style="left:1095.50px;top:1167.15px;font-size:22.5px;letter-spacing:1.141px;-webkit-text-stroke:.3px;color:#000;">6.00</span>
<span class="t" style="left:1207.30px;top:1167.15px;font-size:22.5px;letter-spacing:0.277px;-webkit-text-stroke:.3px;color:#000;">12.00</span>
<span class="t" style="left:1159.50px;top:1220.73px;font-size:23px;font-weight:700;letter-spacing:0.509px;color:#4380ec;">10.66</span>
<svg style="left:0;top:0" width="2400" height="1256" viewBox="0 0 2400 1256"><rect x="1149" y="1157" width="52.00" height="43" fill="#15803d"/><rect x="1174.1" y="1157" width="2.90" height="43" fill="#4fa872"/><rect x="1177" y="1157" width="2.00" height="43" fill="#a6d3e6"/><rect x="1179" y="1157" width="9.10" height="43" fill="#4a80e8"/><rect x="1188.1" y="1157" width="2.10" height="43" fill="#a6d3e6"/><rect x="1190.2" y="1157" width="2.80" height="43" fill="#4fa872"/><rect x="1136" y="1251" width="90.00" height="49" fill="#15803d"/><rect x="1179" y="1251" width="3.90" height="49" fill="#4fa872"/><rect x="1182.9" y="1251" width="2.30" height="49" fill="#a6d3e6"/><rect x="1185.2" y="1251" width="7.50" height="49" fill="#4a80e8"/><rect x="1192.7" y="1251" width="2.30" height="49" fill="#a6d3e6"/><rect x="1195" y="1251" width="3.50" height="49" fill="#4fa872"/></svg>
<div id="fb"></div>
<span class="t" style="left:2182.12px;top:1204.22px;font-size:32.7px;font-weight:700;letter-spacing:-0.719px;transform:scaleX(0.9406);color:#fff;">Feedback</span>
</div>
</body></html>
